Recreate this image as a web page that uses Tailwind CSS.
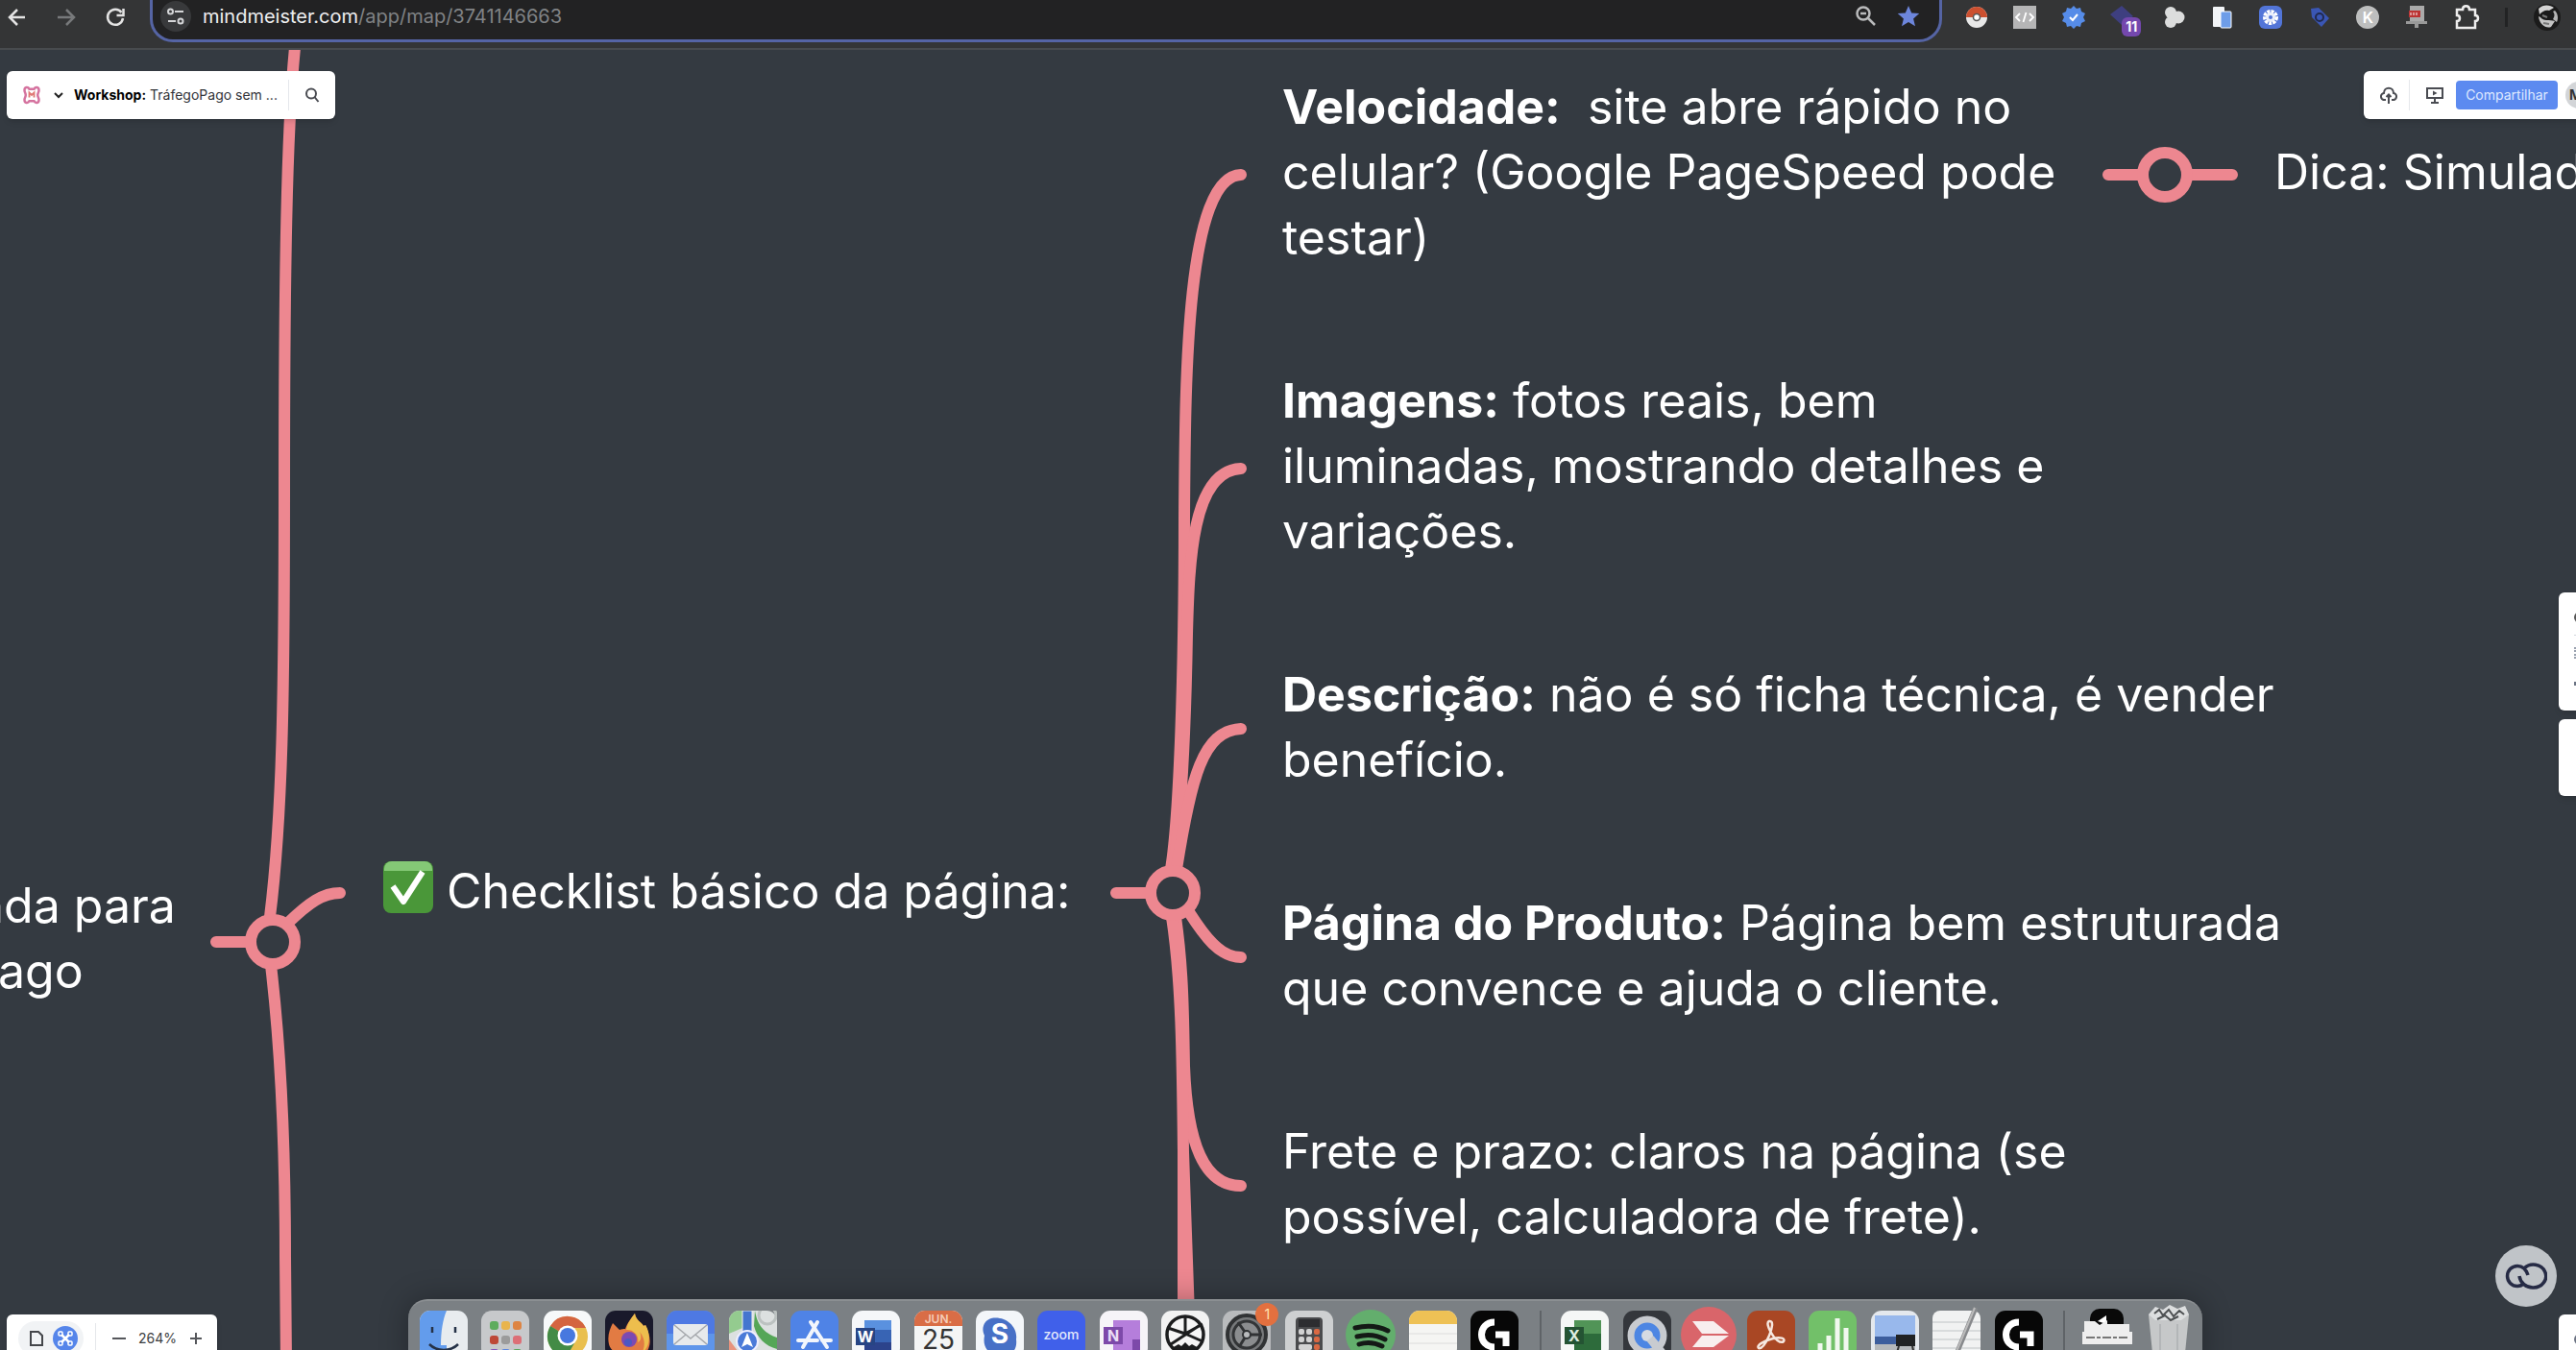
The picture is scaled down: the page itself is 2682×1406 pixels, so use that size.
<!DOCTYPE html>
<html lang="pt-BR">
  <head>
    <meta charset="UTF-8" />
    <meta name="viewport" content="width=device-width, initial-scale=1.0" />
    <title>Workshop: TráfegoPago sem ... - MindMeister</title>

    <!-- Tailwind CSS -->
    <script src="https://cdn.jsdelivr.net/npm/@tailwindcss/browser@4"></script>
  </head>
  <body class="relative flex flex-col h-screen overflow-hidden bg-[#343a41] font-[Inter,sans-serif] text-white">
    <!-- Browser toolbar -->
    <header class="relative z-10 flex items-start h-[52px] shrink-0 bg-[#343536] border-b-2 border-[#484b4e]">
      <nav class="flex w-[156px] h-9 items-center gap-[26px] pl-2 shrink-0">
        <button aria-label="Voltar">
          <svg class="w-6 h-6" viewBox="0 0 24 24" fill="none" stroke="#e3e3e3" stroke-width="2.5"><path d="M18 12H3M10 4l-8 8 8 8" /></svg>
        </button>
        <button aria-label="Avançar">
          <svg class="w-6 h-6" viewBox="0 0 24 24" fill="none" stroke="#77797b" stroke-width="2.5"><path d="M2 12h16M11 4l8 8-8 8" /></svg>
        </button>
        <button aria-label="Recarregar">
          <svg class="w-6 h-6" viewBox="0 0 24 24" fill="none" stroke="#e3e3e3" stroke-width="2.5"><path d="M18.500 7A8 8 0 1 0 20 13" /><path d="M20.500 3v7h-7" /></svg>
        </button>
      </nav>
      <div class="flex flex-1 h-[44px] items-center gap-3 pl-2 pr-5 pb-2 bg-[#222223] border-3 border-t-0 border-[#5564a4] rounded-b-[24px]">
        <button aria-label="Informações do site" class="flex w-8 h-8 items-center justify-center rounded-full bg-[#38393b]">
          <svg class="w-5 h-5" viewBox="0 0 20 20" fill="none" stroke="#d5d6d8" stroke-width="2"><circle cx="4.500" cy="5" r="2.500" /><path d="M9 5h9M2 15h8" /><circle cx="15" cy="15" r="2.500" /></svg>
        </button>
        <!-- Editable div, the domain is brighter than the path -->
        <div role="textbox" aria-label="Endereço" contenteditable="true" spellcheck="false" class="flex-1 text-xl leading-8"><span class="text-[#eeeff0]">mindmeister.com</span><span class="text-[#808285]">/app/map/3741146663</span></div>
        <button aria-label="Zoom">
          <svg class="w-6 h-6" viewBox="0 0 24 24" fill="none" stroke="#b9babb" stroke-width="2.500"><circle cx="9" cy="9" r="6.500" /><path d="M14 14l7 7M6 9h6" /></svg>
        </button>
        <button aria-label="Favorito" class="ml-2">
          <svg class="w-6 h-6" viewBox="0 0 24 24" fill="#6d86dc"><path d="M12 1l3.200 7.400 8 .7-6.100 5.300 1.900 7.900-7-4.200-7 4.200 1.900-7.900L.8 9.100l8-.7z" /></svg>
        </button>
      </div>
      <!-- Extensions -->
      <div class="flex w-[660px] h-9 items-center justify-between pl-6 pr-4 shrink-0">
        <svg class="w-6 h-6" viewBox="0 0 24 24"><circle cx="12" cy="12" r="11" fill="#e8e8e8" /><path d="M1 12a11 11 0 0 1 22 0z" fill="#cc5030" /><circle cx="12" cy="12" r="3.500" fill="#fff" stroke="#555" stroke-width="1.500" /></svg>
        <svg class="w-6 h-6" viewBox="0 0 24 24"><path fill="#b5b5b6" d="M0 0h24v24H0z" /><path d="M7 8l-4 4 4 4M17 8l4 4-4 4M13.500 7l-3 10" fill="none" stroke="#fff" stroke-width="1.800" /></svg>
        <svg class="w-6 h-6" viewBox="0 0 24 24"><path fill="#568ce8" d="M12 0l3 3 4-1 1 4 4 2-2 4 2 4-4 2-1 4-4-1-3 3-3-3-4 1-1-4-4-2 2-4-2-4 4-2 1-4 4 1z" /><path d="M8 12l3 3 5-6" fill="none" stroke="#fff" stroke-width="2" /></svg>
        <div class="relative w-7 h-6">
          <svg class="w-6 h-6" viewBox="0 0 24 24"><path fill="#3e3f80" d="M12 0l12 11-12 9L0 9z" /></svg>
          <span class="absolute left-3 top-3 w-5 h-5 rounded-md bg-[#7448ad] text-center text-sm leading-5 font-bold">11</span>
        </div>
        <svg class="w-6 h-6" viewBox="0 0 24 24" fill="#dcdddd"><circle cx="8" cy="7" r="6" /><circle cx="8" cy="17" r="6" /><circle cx="16" cy="12" r="6.500" /></svg>
        <svg class="w-6 h-6" viewBox="0 0 24 24"><rect x="2" y="1" width="12" height="21" rx="1" fill="#f2f4f7" /><rect x="10" y="6" width="11" height="17" rx="1" fill="#6e9de8" stroke="#fff" /></svg>
        <svg class="w-6 h-6" viewBox="0 0 24 24"><rect width="24" height="24" rx="6" fill="#5275d8" /><circle cx="12" cy="12" r="6" fill="none" stroke="#fff" stroke-width="4" stroke-dasharray="3 1" /><circle cx="12" cy="12" r="5" fill="#e9eefb" /><circle cx="12" cy="12" r="2" fill="#5275d8" /></svg>
        <svg class="w-6 h-6" viewBox="0 0 24 24"><path d="M3 3l8-1 11 11-8 9L4 12z" fill="#3a56b4" /><circle cx="12" cy="12" r="4" fill="none" stroke="#20294e" stroke-width="2" /></svg>
        <div class="w-6 h-6 rounded-full bg-[#bdbebe] text-center text-base leading-6 font-semibold">K</div>
        <svg class="w-6 h-6" viewBox="0 0 24 24"><path fill="#aaa" d="M5 0h15v16H5z" /><path fill="#b33" d="M4 5h12v7H4z" /><path fill="#999" d="M1 16h22v3H1zM10 19h4v4h-4z" /><path d="M6 7v3M9 7v3M12 7v3" stroke="#fff" /></svg>
        <svg class="w-7 h-7" viewBox="0 0 28 28" fill="none" stroke="#eee" stroke-width="2.500"><path d="M4 6h6c0-5 7-5 7 0h6v6c4 0 4 6 0 6v7H4v-7c4 0 4-6 0-6z" /></svg>
        <span class="w-[3px] h-5 bg-[#222324]"></span>
        <svg class="w-7 h-7" viewBox="0 0 28 28"><circle cx="14" cy="14" r="14" fill="#1b1b1b" /><path d="M5 5c5-5 12-4 16-1l-5 3c-4-1-7 1-10 4z" fill="#d3d3d3" /><path d="M22 7c3 3 4 8 2 12l-4-3c2-3 2-6 0-8z" fill="#b5b5b5" /><path d="M5 13c3 1 4 4 8 4s6 0 9 1l-4 6c-5 2-12-2-13-11z" fill="#c4c4c4" /><path d="M9 12l5 2M10 20l6 1" stroke="#777" stroke-width="2" /></svg>
      </div>
    </header>

    <!-- Map canvas -->
    <main class="relative flex-1 text-[50px] leading-[68px]">
      <svg class="absolute left-0 top-0 w-[2682px] h-[1354px]" viewBox="0 52 2682 1354" fill="none" stroke="#ed8790" stroke-width="12" stroke-linecap="round">
        <path d="M308 40C298 130 296 300 296 513S294 850 281 955" />
        <path d="M282 1005C292 1090 297 1200 297 1309L298 1420" />
        <path d="M225 981h34M300 961C322 940 336 930 354 930" />
        <circle cx="284" cy="981" r="23" />

        <path d="M1162 930h32M1292 182C1234 184 1234 400 1233 540C1233 700 1228 850 1219 905" />
        <path d="M1292 488C1240 490 1238 590 1236 660C1234 780 1228 860 1222 905" />
        <path d="M1292 759C1252 761 1240 810 1225 905" />
        <path d="M1238 950C1254 975 1270 997 1292 997" />
        <path d="M1224 955C1232 1010 1232 1060 1233 1110C1236 1192 1254 1235 1292 1235" />
        <path d="M1220 955C1230 1020 1231 1100 1232 1200V1370M1232 1200L1238 1370" />
        <circle cx="1221" cy="930" r="23" />

        <path d="M2195 182h32M2282 182h42" />
        <circle cx="2254" cy="182" r="23" />
      </svg>

      <!-- Parent topic, runs off the left edge -->
      <p class="absolute left-[-24px] top-[857px] flex flex-col whitespace-nowrap"><span>ada para</span><span class="pl-[22px]">ago</span></p>

      <div class="absolute left-[399px] top-[842px] flex items-center gap-[14px] whitespace-nowrap">
        <svg class="w-[52px] h-[54px] mb-2" viewBox="0 0 52 54"><rect width="52" height="54" rx="8" fill="#4a9739" /><path d="M1 10V8a8 8 0 0 1 8-8h34a8 8 0 0 1 8 8v2z" fill="#84c876" /><path d="M10 26l11 16L41 11" fill="none" stroke="#fff" stroke-width="6" stroke-linejoin="round" /></svg>
        <span>Checklist básico da página:</span>
      </div>

      <p class="absolute left-[1335px] top-[25px] whitespace-nowrap"><b>Velocidade:</b>&nbsp; site abre rápido no<br />celular? (Google PageSpeed pode<br />testar)</p>
      <p class="absolute left-[1335px] top-[331px] whitespace-nowrap"><b>Imagens:</b> fotos reais, bem<br />iluminadas, mostrando detalhes e<br />variações.</p>
      <p class="absolute left-[1335px] top-[637px] whitespace-nowrap"><b>Descrição:</b> não é só ficha técnica, é vender<br />benefício.</p>
      <p class="absolute left-[1335px] top-[875px] whitespace-nowrap"><b>Página do Produto:</b> Página bem estruturada<br />que convence e ajuda o cliente.</p>
      <p class="absolute left-[1335px] top-[1113px] whitespace-nowrap">Frete e prazo: claros na página (se<br />possível, calculadora de frete).</p>
      <p class="absolute left-[2368px] top-[93px] whitespace-nowrap">Dica: Simulad</p>

      <!-- Map title -->
      <div class="absolute left-[7px] top-[22px] flex items-center w-[342px] h-[50px] pl-4 rounded-md bg-white shadow-md text-sm text-[#303238]">
        <svg class="w-5 h-5" viewBox="0 0 16 16" fill="none"><path d="M2 4c0-3 3-3 4-1h4c1-2 4-2 4 1 0 2-1 2-1 4s1 2 1 4c0 3-3 3-4 1H6c-1 2-4 2-4-1 0-2 1-2 1-4S2 6 2 4z" stroke="#d5739f" stroke-width="2" /><path d="M6 10V6l2 2 2-2v4" stroke="#e07a76" stroke-width="1.500" /></svg>
        <button aria-label="Menu" class="ml-3">
          <svg class="w-3 h-3" viewBox="0 0 12 12" fill="none" stroke="#222" stroke-width="2"><path d="M2 4l4 4 4-4" /></svg>
        </button>
        <span class="ml-[10px] whitespace-nowrap"><b class="text-black">Workshop:</b> TráfegoPago sem ...</span>
        <button aria-label="Buscar" class="flex items-center ml-auto h-8 px-4 border-l border-gray-200">
          <svg class="w-4 h-4" viewBox="0 0 16 16" fill="none" stroke="#4a4c52" stroke-width="2"><circle cx="7" cy="6.500" r="5" /><path d="M10.500 10l4 5" /></svg>
        </button>
      </div>

      <!-- Share bar -->
      <div class="absolute right-[-20px] top-[22px] flex items-center w-[241px] h-[50px] rounded-l-md bg-white shadow-md">
        <button aria-label="Publicar" class="flex w-12 h-8 items-center justify-center pl-1 border-r border-gray-200">
          <svg class="w-[18px] h-[18px]" viewBox="0 0 18 18" fill="none" stroke="#4a4c52" stroke-width="2"><path d="M6 14H5a3.500 3.500 0 0 1-1-7c0-7 10-7 10 0a3.500 3.500 0 0 1-1 7h-1M9 18V9M6.500 11L9 8.500l2.500 2.500" /></svg>
        </button>
        <button aria-label="Apresentar" class="flex w-12 h-8 items-center justify-center pl-1">
          <svg class="w-[18px] h-[18px]" viewBox="0 0 18 18" fill="none" stroke="#4a4c52" stroke-width="2"><path d="M1 2h16v10H1zM9 12v5M5 17h8" /><path d="M7 4.500l4.500 2.500L7 9.500z" fill="#4a4c52" stroke="none" /></svg>
        </button>
        <button class="w-[106px] h-[30px] rounded-sm bg-[#5c8af0] text-sm text-[#dfe9ff]">Compartilhar</button>
        <span class="ml-2 w-7 h-7 rounded-full bg-[#d3d5d8] pl-1 text-sm leading-7 font-bold text-[#333]">M</span>
      </div>

      <!-- Side panels -->
      <div class="absolute right-[-12px] top-[565px] flex flex-col w-[30px] h-[123px] pl-4 pt-5 gap-3 rounded-l-md bg-white shadow-md">
        <i class="w-3 h-3 rounded-full bg-[#555]"></i>
        <i class="h-px bg-gray-300"></i>
        <i class="w-3 h-3 border-l-2 border-dotted border-gray-400"></i>
        <i class="w-3 h-1 mt-3 bg-gray-500"></i>
      </div>
      <div class="absolute right-[-12px] top-[697px] w-[30px] h-20 rounded-l-md bg-white shadow-md"></div>
      <div class="absolute right-[-12px] bottom-[-20px] w-[30px] h-[57px] pl-4 pt-5 rounded-l-md bg-white shadow-md">
        <i class="block w-3 h-3 rounded-full border-2 border-gray-500"></i>
      </div>

      <button aria-label="Creative Cloud" class="absolute right-5 bottom-[45px] flex w-16 h-16 items-center justify-center rounded-full bg-[#c0c4c8]">
        <svg class="w-11 h-8" viewBox="0 0 44 32" fill="none" stroke="#262b45" stroke-width="3.500"><path d="M24 15C22 9 18 5.500 13 5.500a10.500 10.500 0 0 0 0 21c3 0 5-1 7-3" /><path d="M15 16c1 7 7 12 14 12a13 12 0 1 0-9-20" /></svg>
      </button>

      <!-- Zoom bar -->
      <div class="absolute left-[7px] bottom-[-13px] flex items-center w-[219px] h-[50px] pl-3 rounded-md bg-white shadow-md text-sm text-[#3c3e42]">
        <div class="flex items-center w-[68px] h-9 pl-[10px] gap-2 rounded-full bg-[#f1f3f5]">
          <button aria-label="Documento">
            <svg class="w-[18px] h-[18px]" viewBox="0 0 18 18" fill="none" stroke="#44464a" stroke-width="2"><path d="M3 2h8l4 4v10H3z" /></svg>
          </button>
          <button aria-label="Mapa" class="flex w-[26px] h-[26px] items-center justify-center rounded-full bg-[#5585ea]">
            <svg class="w-4 h-4" viewBox="0 0 16 16" fill="none" stroke="#fff" stroke-width="1.500"><path d="M4 4l8 8M12 4l-8 8" stroke-width="2.500" /><rect x="1" y="1" width="4" height="4" rx="1" /><rect x="11" y="1" width="4" height="4" rx="1" /><rect x="1" y="11" width="4" height="4" rx="1" /><rect x="11" y="11" width="4" height="4" rx="1" /></svg>
          </button>
        </div>
        <i class="ml-3 w-px h-8 bg-gray-200"></i>
        <button aria-label="Diminuir zoom" class="ml-4"><svg class="w-4 h-4" viewBox="0 0 16 16" stroke="#55575b" stroke-width="2"><path d="M1 8h14" /></svg></button>
        <span class="flex-1 text-center">264%</span>
        <button aria-label="Aumentar zoom" class="mr-[14px]"><svg class="w-4 h-4" viewBox="0 0 16 16" stroke="#55575b" stroke-width="2"><path d="M2 8h12M8 2v12" /></svg></button>
      </div>
    </main>

    <!-- Dock -->
    <div class="absolute z-20 left-[425px] bottom-[-27px] flex w-[1868px] h-20 pl-3 pt-[10px] rounded-[20px] border-t-2 border-[#8b8f92] bg-[#7b8084] shadow-[0_0_30px_rgba(0,0,0,0.3)]">
      <div class="flex w-[1144px] justify-between">
        <svg class="w-[50px] h-[50px]" viewBox="0 0 50 50"><rect width="50" height="50" rx="11" fill="#e8ecef" /><path d="M28 0H11A11 11 0 0 0 0 11v28a11 11 0 0 0 11 11h19c-2-5-2-9-2-14h-6C22 22 24 9 28 0z" fill="#639cec" /><path d="M13 17v6M37 17v6M10 35c8 8 22 8 30 0" stroke="#253247" stroke-width="2.500" fill="none" /></svg>
        <svg class="w-[50px] h-[50px]" viewBox="0 0 50 50"><rect width="50" height="50" rx="11" fill="#c7c9cb" /><rect x="9" y="11" width="9" height="9" rx="3" fill="#5dac5c" /><rect x="21" y="11" width="9" height="9" rx="3" fill="#e8b44c" /><rect x="33" y="11" width="9" height="9" rx="3" fill="#dd8443" /><rect x="9" y="26" width="9" height="9" rx="3" fill="#bd4837" /><rect x="21" y="26" width="9" height="9" rx="3" fill="#9b9b9b" /><rect x="33" y="26" width="9" height="9" rx="3" fill="#dc6f76" /><rect x="9" y="40" width="9" height="9" rx="3" fill="#8453bc" /><rect x="21" y="40" width="9" height="9" rx="3" fill="#5a86df" /><rect x="33" y="40" width="9" height="9" rx="3" fill="#59a65c" /></svg>
        <svg class="w-[50px] h-[50px]" viewBox="0 0 50 50"><rect width="50" height="50" rx="11" fill="#f7f9fa" /><circle cx="25" cy="27" r="21" fill="#e9bf4e" /><path d="M7 16a21 21 0 0 1 37 2H25v9z" fill="#d46440" /><path d="M7 16a21 21 0 0 0 17 32l9-16-8-5z" fill="#438b46" /><circle cx="25" cy="26" r="10.500" fill="#fff" /><circle cx="25" cy="26" r="8" fill="#4778df" /></svg>
        <svg class="w-[50px] h-[50px]" viewBox="0 0 50 50"><rect width="50" height="50" rx="11" fill="#19192b" /><path d="M8 13l7 7c2-1 4-1 6-1 2-6 7-12 10-16 1 7 7 9 9 13l2-1c3 8 7 15 3 25-5 10-37 11-41-5-2-9 1-16 4-22z" fill="#e27b43" /><path d="M31 3c-3 4-8 10-9 17 7-1 14 6 12 13 5-2 3-9 2-11 6 7 6 16 2 22 9-5 10-20 4-29l-2 1c-2-4-8-6-9-13z" fill="#edbe4d" /><circle cx="25" cy="30" r="8" fill="#7c4ab1" /><circle cx="24" cy="33" r="4" fill="#4c58c2" /></svg>
        <svg class="w-[50px] h-[50px]" viewBox="0 0 50 50"><rect width="50" height="50" rx="11" fill="#5e95ea" /><path d="M0 24V11A11 11 0 0 1 11 0h28a11 11 0 0 1 11 11v13z" fill="#4e79e3" /><rect x="7" y="14" width="36" height="22" rx="3" fill="#e7eaec" /><path d="M8 15l17 14 17-14M8 35l12-10M42 35L30 25" fill="none" stroke="#a5a8ac" stroke-width="1.500" /></svg>
        <svg class="w-[50px] h-[50px]" viewBox="0 0 50 50"><rect width="50" height="50" rx="11" fill="#dce0e0" /><path d="M0 24V11A11 11 0 0 1 11 0h3v18z" fill="#94cb8f" /><path d="M27 0c3 18 12 24 23 28v12C38 37 29 28 26 16z" fill="#55a657" /><circle cx="40" cy="5" r="9" fill="none" stroke="#bcc2c1" stroke-width="3" /><path fill="#4476cf" stroke="#eee" d="M14 0h10v30H14z" /><path d="M0 30l15 20H4L0 45z" fill="#e6937e" /><circle cx="19" cy="32" r="11" fill="#4a7ad8" stroke="#eef" stroke-width="2" /><path d="M19 23l6 15-6-3-6 3z" fill="#fff" /></svg>
        <svg class="w-[50px] h-[50px]" viewBox="0 0 50 50"><rect width="50" height="50" rx="11" fill="#4f83e6" /><path d="M21 12l17 26M28 12L13 38M8 31h20M33 31h9" stroke="#f2f6fc" stroke-width="4" stroke-linecap="round" /></svg>
        <svg class="w-[50px] h-[50px]" viewBox="0 0 50 50"><rect width="50" height="50" rx="11" fill="#f5f7f9" /><path d="M13 10h28v12H13z" fill="#5a91df" /><path d="M13 20h28v14H13z" fill="#3864b4" /><path d="M13 33h28v17H13z" fill="#2c438b" /><path fill="#274584" d="M4 18h20v18H4z" /><text x="14" y="33" fill="#fff" font-size="16" font-weight="700" text-anchor="middle">W</text></svg>
        <svg class="w-[50px] h-[50px]" viewBox="0 0 50 50"><rect width="50" height="50" rx="11" fill="#f4f5f5" /><path d="M0 16v-5A11 11 0 0 1 11 0h28a11 11 0 0 1 11 11v5z" fill="#d96d46" /><text x="25" y="13" fill="#f6cdb9" font-size="12" font-weight="600" text-anchor="middle">JUN.</text><text x="25" y="40" fill="#333" font-size="28" text-anchor="middle">25</text></svg>
        <svg class="w-[50px] h-[50px]" viewBox="0 0 50 50"><rect width="50" height="50" rx="11" fill="#f3f6f9" /><path d="M16 8c14-3 28 8 26 22 2 16-12 18-18 15C11 46 7 36 9 26c-4-8 0-16 7-18z" fill="#4770c6" /><text x="25" y="34" fill="#fff" font-size="28" font-weight="700" text-anchor="middle">S</text></svg>
        <svg class="w-[50px] h-[50px]" viewBox="0 0 50 50"><rect width="50" height="50" rx="11" fill="#4060ea" /><text x="25" y="30" fill="#e4e9fc" font-size="14" font-weight="500" text-anchor="middle">zoom</text></svg>
        <svg class="w-[50px] h-[50px]" viewBox="0 0 50 50"><rect width="50" height="50" rx="11" fill="#f6f4f8" /><path fill="#b57edb" d="M14 10h28v40H14z" /><path fill="#7d49a9" d="M34 30h8v20h-8zM4 17h20v18H4z" /><text x="14" y="32" fill="#eadcf5" font-size="16" font-weight="700" text-anchor="middle">N</text></svg>
        <svg class="w-[50px] h-[50px]" viewBox="0 0 50 50"><rect width="50" height="50" rx="11" fill="#f2f2f2" /><circle cx="25" cy="25" r="19" fill="#f6f6f6" stroke="#1c1d1e" stroke-width="3.500" /><path d="M25 7v16M7 18l18 6 18-10M10 35l32-21M25 24l18 8" stroke="#1c1d1e" stroke-width="3" fill="none" /><path d="M11 39l7-4 3 2 4-4 4 4 3-2 7 4-14 6z" fill="#1c1d1e" /></svg>
        <div class="relative w-[50px] h-[50px]">
          <svg class="w-[50px] h-[50px]" viewBox="0 0 50 50"><rect width="50" height="50" rx="11" fill="#b9bbbd" /><circle cx="25" cy="25" r="20" fill="#77797b" stroke="#303234" stroke-width="4" /><circle cx="25" cy="25" r="14" fill="#8b8d8f" stroke="#333537" stroke-width="3" /><path d="M25 25l-9-13M25 25h16M25 25l-8 13" stroke="#303234" stroke-width="3" /><circle cx="25" cy="25" r="4" fill="#b9bbbd" stroke="#303234" stroke-width="2" /></svg>
          <span class="absolute -right-2 -top-2 w-6 h-6 rounded-full bg-[#e3703f] text-center text-sm leading-6 text-[#ffe5b0]">1</span>
        </div>
        <svg class="w-[50px] h-[50px]" viewBox="0 0 50 50"><rect width="50" height="50" rx="11" fill="#ced0d1" /><rect x="11" y="7" width="28" height="46" rx="4" fill="#4a4b4d" /><path fill="#2c2d30" d="M14 9h22v8H14z" /><g fill="#d2d2d2"><rect x="14" y="19" width="6" height="6" rx="2" /><rect x="22" y="19" width="6" height="6" rx="2" /><rect x="14" y="27" width="6" height="6" rx="2" /><rect x="22" y="27" width="6" height="6" rx="2" /><rect x="14" y="35" width="14" height="6" rx="2" /></g><g fill="#d96843"><rect x="30" y="19" width="6" height="6" rx="2" /><rect x="30" y="27" width="6" height="6" rx="2" /><rect x="30" y="35" width="6" height="6" rx="2" /></g></svg>
        <svg class="w-[50px] h-[50px] overflow-visible" viewBox="0 0 50 50"><circle cx="25" cy="25" r="26" fill="#63ae6d" /><path d="M9 18c12-3 24-2 34 3M11 27c11-3 20-2 29 3M13 35c9-3 16-2 24 2" fill="none" stroke="#141a16" stroke-width="5" stroke-linecap="round" /></svg>
        <svg class="w-[50px] h-[50px]" viewBox="0 0 50 50"><rect width="50" height="50" rx="11" fill="#f5f5f3" /><path d="M0 14v-3A11 11 0 0 1 11 0h28a11 11 0 0 1 11 11v3z" fill="#eec155" /><path d="M0 24h50M0 34h50" stroke="#dcdcdc" /></svg>
        <svg class="w-[50px] h-[50px]" viewBox="0 0 50 50"><rect width="50" height="50" rx="11" fill="#070707" /><path d="M25 12C7 12 7 38 25 38M26 25h11v12" fill="none" stroke="#fff" stroke-width="7" /></svg>
      </div>
      <i class="ml-[22px] w-[2px] h-12 bg-[#5f6367]"></i>
      <div class="flex ml-5 w-[502px] justify-between">
        <svg class="w-[50px] h-[50px]" viewBox="0 0 50 50"><rect width="50" height="50" rx="11" fill="#f5f7f6" /><path fill="#519457" d="M14 10h28v14H14z" /><path fill="#2d6b3b" d="M14 24h28v26H14z" /><path fill="#245333" d="M4 17h20v18H4z" /><text x="14" y="32" fill="#dfeee2" font-size="16" font-weight="700" text-anchor="middle">X</text></svg>
        <svg class="w-[50px] h-[50px]" viewBox="0 0 50 50"><rect width="50" height="50" rx="11" fill="#34373c" /><circle cx="25" cy="26" r="17" fill="#4d86e3" stroke="#c8cbd0" stroke-width="7" /><circle cx="25" cy="26" r="6" fill="#d5dae2" /><path d="M28 29l14 17" stroke="#c8cbd0" stroke-width="9" /></svg>
        <svg class="w-[50px] h-[50px] overflow-visible" viewBox="0 0 50 50"><circle cx="25" cy="25" r="29" fill="#d9656a" /><path d="M8 11h22l16 13H18zM8 38h22l16-12H18z" fill="#f8eeee" /></svg>
        <svg class="w-[50px] h-[50px]" viewBox="0 0 50 50"><rect width="50" height="50" rx="11" fill="#a94724" /><path d="M23 11c5-1 3 8 0 15-4 9-8 14-11 13-3-3 7-8 15-10 8-2 13 0 11 3-3 3-10-3-13-9-3-5-5-11-2-12z" fill="none" stroke="#f6e7df" stroke-width="2.500" /></svg>
        <svg class="w-[50px] h-[50px]" viewBox="0 0 50 50"><rect width="50" height="50" rx="11" fill="#72c069" /><path d="M12 50V34M21 50V26M30 50V8M39 50V18" stroke="#f1f8ef" stroke-width="5" /></svg>
        <svg class="w-[50px] h-[50px]" viewBox="0 0 50 50"><rect width="50" height="50" rx="11" fill="#e4e8ed" /><path fill="#98b8ec" d="M4 5h42v22H4z" /><path fill="#3d5e9d" d="M4 27h42v8H4z" /><path fill="#b5b8bb" d="M4 35h42v15H4z" /><path fill="#202224" d="M26 25h20v12H26z" /><path d="M29 37l-4 13M43 37l3 13" stroke="#333" stroke-width="2" /></svg>
        <svg class="w-[50px] h-[50px] overflow-visible" viewBox="0 0 50 50"><rect width="50" height="50" rx="8" fill="#f1f2f2" /><path d="M0 12h50M0 21h50M0 30h50M0 39h50" stroke="#d0d3d5" stroke-width="1.500" /><path d="M45-3L25 45" stroke="#87898c" stroke-width="5" /><path d="M44-3L24 45" stroke="#bbb" stroke-width="2" /></svg>
        <svg class="w-[50px] h-[50px]" viewBox="0 0 50 50"><rect width="50" height="50" rx="11" fill="#070707" /><path d="M25 12C7 12 7 38 25 38M26 25h11v12" fill="none" stroke="#fff" stroke-width="7" /></svg>
      </div>
      <i class="ml-[21px] w-[2px] h-12 bg-[#5f6367]"></i>
      <div class="flex ml-[18px] gap-4">
        <svg class="w-[52px] h-[50px] overflow-visible" viewBox="0 0 52 50"><rect x="8" y="-2" width="35" height="30" rx="10" fill="#090909" /><path d="M16 11l9-6v9z" fill="#fff" /><path d="M2 11h11l5 4 8-5v4h23v8h3v13H0V22h2z" fill="#eee" /><path d="M4 28h44" stroke="#777" stroke-width="2" stroke-dasharray="9 2 4 2" /></svg>
        <svg class="w-[44px] h-[50px] overflow-visible" viewBox="0 0 44 50"><path d="M1 4h42l-5 50H6z" fill="#c6c8c9" /><path d="M1 4l7-8 8 3 7-5 8 4 8-3 4 9-8 6H8z" fill="#dcdedf" /><path d="M7 3l5-4 4 6 6-6 5 7 6-6 5 4M10 9l8-4 6 5 8-4" stroke="#4e5153" stroke-width="2" fill="none" /><path d="M13 14v36M31 14v36" stroke="#b3b6b8" stroke-width="2" /></svg>
      </div>
    </div>
  </body>
</html>
